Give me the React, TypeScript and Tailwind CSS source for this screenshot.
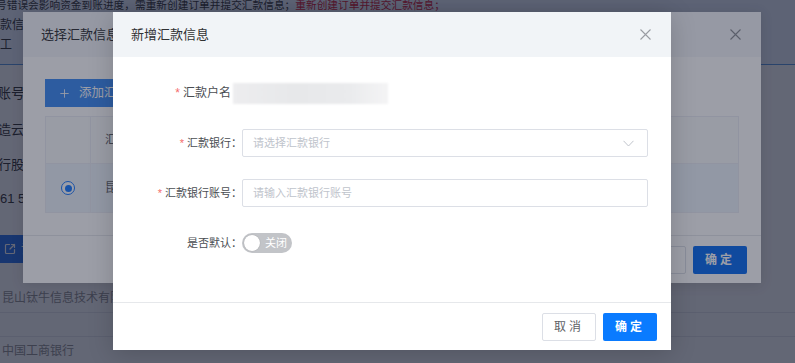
import { Plus, SquareArrowOutUpRight } from "lucide-react";

// Two stacked dialogs over a remittance page: "选择汇款信息" underneath,
// "新增汇款信息" on top. Each dialog brings its own mask.

function CloseIcon({ color = "#8d9096" }: { color?: string }) {
  return (
    <svg width="11" height="11" viewBox="0 0 11 11" fill="none">
      <path d="M0.5 0.5L10.5 10.5M10.5 0.5L0.5 10.5" stroke={color} strokeWidth="1.1" />
    </svg>
  );
}

function Page() {
  return (
    <div className="flex flex-col text-[#222]">
      <div className="h-[65px] border-b border-[#4a90e2] bg-[#eaf3ff] text-[12px] leading-[20px]">
        <div className="-mt-[5px] -ml-[4px] whitespace-nowrap text-[10.7px]">
          号错误会影响资金到账进度，需重新创建订单并提交汇款信息；
          <span className="text-[#d0021b]">重新创建订单并提交汇款信息；</span>
        </div>
        <div>款信息</div>
        <div>工</div>
      </div>
      <div className="mt-[14px] flex h-[28px] items-center -ml-[3px] text-[14px]">账号</div>
      <div className="mt-[9px] flex h-[28px] items-center -ml-[2px] text-[13px]">造云智</div>
      <div className="mt-[7px] flex h-[28px] items-center -ml-[2px] text-[13px]">行股份</div>
      <div className="mt-[6px] flex h-[28px] items-center text-[13px]">61 53</div>
      <div className="mt-[22px] flex h-[28px] w-[90px] items-center gap-[5px] bg-[#1668f0] pl-[4px] text-[13px] text-white">
        <SquareArrowOutUpRight size={12} strokeWidth={2.4} />
        设置
      </div>
      <div className="mt-[21px] flex h-[29px] items-center border-b border-[#e4e7ed] pl-[2px] text-[12px] text-[#888]">
        昆山钛牛信息技术有限公司
      </div>
      <div className="h-[24px] border-b border-[#e4e7ed]" />
      <div className="flex h-[28px] items-center pl-[2px] text-[12px] text-[#888]">中国工商银行</div>
    </div>
  );
}

function SelectDialog() {
  return (
    <div className="absolute left-[23px] top-[12px] flex h-[271px] w-[738px] flex-col bg-white shadow-[0_2px_12px_rgba(0,0,0,0.12)]">
      <div className="flex h-[45px] items-center justify-between bg-[#f4f6f9] pl-[18px] pr-[20px]">
        <span className="text-[13px] text-[#303133]">选择汇款信息</span>
        <CloseIcon />
      </div>
      <div className="flex-1 px-[22px] pt-[22px]">
        <div className="flex h-[28px] w-[120px] items-center gap-[8px] bg-[#3d8bf2] pl-[13px] text-[12.5px] text-white">
          <Plus size={13} strokeWidth={1.6} />
          添加汇款信息
        </div>
        <div className="mt-[9px] border border-[#ebeef5] text-[12px] text-[#606266]">
          <div className="flex h-[47px] border-b border-[#ebeef5] bg-[#fafbfc]">
            <div className="w-[45px] border-r border-[#ebeef5]" />
            <div className="flex items-center pl-[14px]">汇款户名</div>
          </div>
          <div className="flex h-[48px] bg-[#eef4fc]">
            <div className="flex w-[45px] items-center justify-center border-r border-[#ebeef5]">
              <span className="flex h-[14px] w-[14px] items-center justify-center rounded-full border border-[#1a7bff] bg-white">
                <span className="h-[7px] w-[7px] rounded-full bg-[#1a7bff]" />
              </span>
            </div>
            <div className="flex items-center pl-[14px]">昆山钛牛信息技术有限公司</div>
          </div>
        </div>
      </div>
      <div className="flex h-[48px] items-center justify-end gap-[7px] border-t border-[#e6e8eb] pr-[14px]">
        <div className="flex h-[28px] w-[54px] items-center justify-center rounded-[2px] border border-[#dcdfe6] text-[12px] tracking-[3px] text-[#606266]">
          取消
        </div>
        <div className="flex h-[28px] w-[54px] items-center justify-center rounded-[2px] bg-[#0a6cf0] text-[12px] font-bold tracking-[3px] text-white">
          确定
        </div>
      </div>
    </div>
  );
}

function Label({ text }: { text: string }) {
  return (
    <div className="w-[129px] shrink-0 text-right text-[11px] text-[#4a4d52]">
      <span className="mr-[3px] text-[#f56c6c]">*</span>
      {text}：
    </div>
  );
}

function AddDialog() {
  return (
    <div className="absolute left-[113px] top-[12px] flex w-[558px] flex-col bg-white shadow-[0_4px_24px_rgba(0,0,0,0.18)]">
      <div className="flex h-[45px] items-center justify-between bg-[#f1f4f7] pl-[18px] pr-[20px]">
        <span className="text-[13px] text-[#303133]">新增汇款信息</span>
        <CloseIcon color="#9a9da3" />
      </div>

      <div className="flex flex-col gap-[22px] pb-[45px] pt-[22px]">
        <div className="flex h-[28px] items-center">
          <div className="w-[118px] shrink-0 text-right text-[12px] text-[#4a4d52]">
            <span className="mr-[3px] text-[#f56c6c]">*</span>
            汇款户名
          </div>
          <div className="ml-[2px] h-[21px] w-[155px] bg-[linear-gradient(90deg,#ededef_0%,#e7e8ea_40%,#eaebed_75%,#f4f4f5_100%)] blur-[1px]" />
        </div>

        <div className="flex h-[28px] items-center">
          <Label text="汇款银行" />
          <div className="flex h-[28px] w-[406px] items-center justify-between rounded-[2px] border border-[#dcdfe6] pl-[10px] pr-[13px] text-[11px] text-[#c0c4cc]">
            请选择汇款银行
            <svg width="11" height="7" viewBox="0 0 11 7" fill="none">
              <path d="M0.5 0.8L5.5 6L10.5 0.8" stroke="#c0c4cc" strokeWidth="1" />
            </svg>
          </div>
        </div>

        <div className="flex h-[28px] items-center">
          <Label text="汇款银行账号" />
          <div className="flex h-[28px] w-[406px] items-center rounded-[2px] border border-[#dcdfe6] pl-[10px] text-[11px] text-[#c0c4cc]">
            请输入汇款银行账号
          </div>
        </div>

        <div className="flex h-[28px] items-center">
          <div className="w-[129px] shrink-0 text-right text-[11px] text-[#4a4d52]">是否默认：</div>
          <div className="flex h-[20px] w-[50px] items-center rounded-full bg-[#c2c4c8] pl-[2px]">
            <span className="h-[16px] w-[16px] rounded-full bg-white shadow-[0_0_1px_rgba(0,0,0,0.3)]" />
            <span className="ml-[5px] text-[11px] text-white">关闭</span>
          </div>
        </div>
      </div>

      <div className="flex h-[48px] items-center justify-end gap-[7px] border-t border-[#e6e8eb] pr-[14px]">
        <div className="flex h-[28px] w-[54px] items-center justify-center rounded-[2px] border border-[#dcdfe6] text-[12px] tracking-[3px] text-[#606266]">
          取消
        </div>
        <div className="flex h-[28px] w-[54px] items-center justify-center rounded-[2px] bg-[#0a7bff] text-[12px] font-bold tracking-[3px] text-white">
          确定
        </div>
      </div>
    </div>
  );
}

export default function App() {
  return (
    <div className="relative h-[363px] w-[795px] overflow-hidden bg-white font-['Liberation_Sans','Noto_Sans_CJK_SC',sans-serif]">
      <Page />
      <div className="absolute inset-0 bg-[rgba(25,30,50,0.43)]" />
      <SelectDialog />
      <div className="absolute inset-0 bg-[rgba(25,30,50,0.43)]" />
      <AddDialog />
    </div>
  );
}
